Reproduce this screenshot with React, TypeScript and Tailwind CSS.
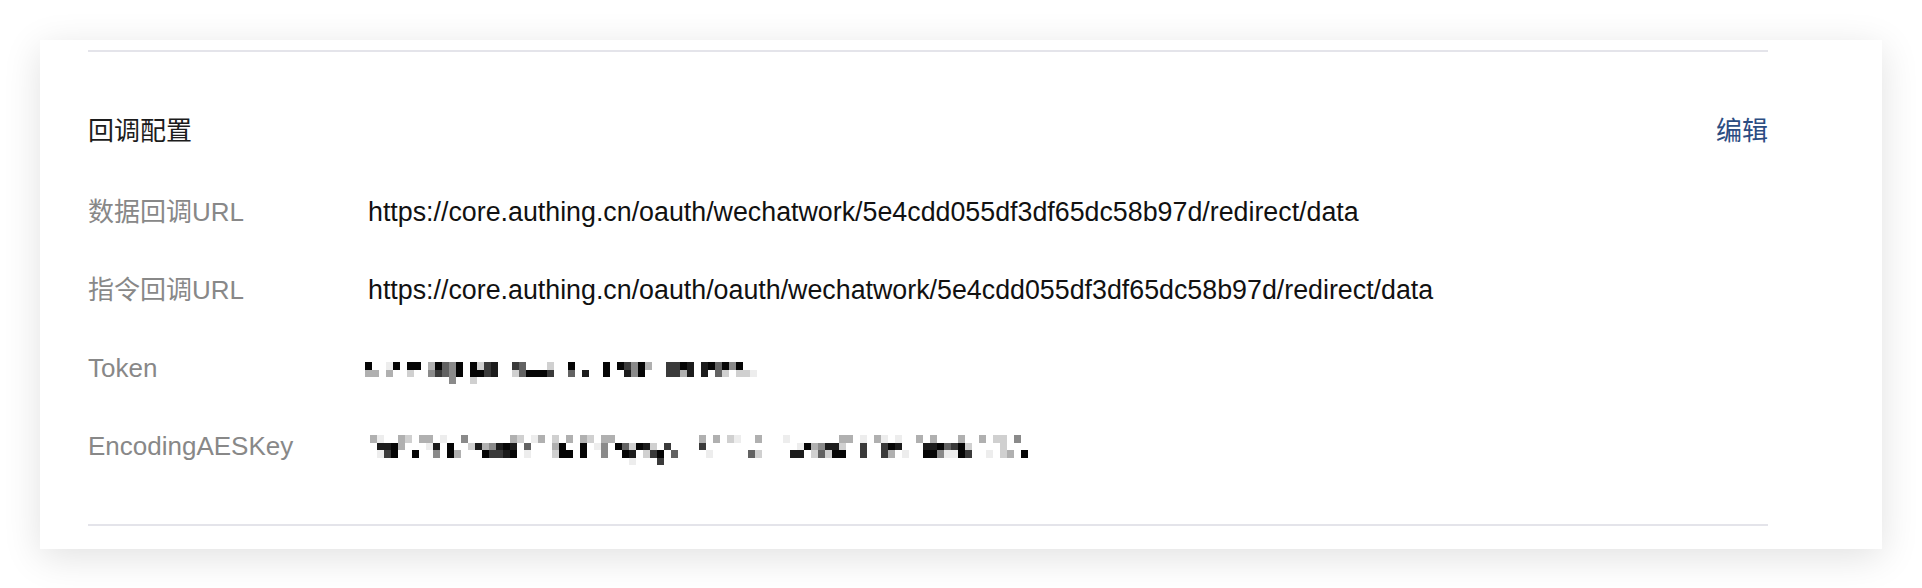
import React from 'react';

// shades used by the pixelated (masked) secret values
const shades: Record<string, string> = {
  a: '#ededed',
  b: '#d0d0d0',
  c: '#b0b0b0',
  d: '#8a8a8a',
  e: '#626262',
  f: '#3a3a3a',
  g: '#1c1c1c',
  h: '#050505',
};

const tokenRows = [
  '0h 3a 4h 6h 7h 9c 10h 11e 12d 13h 15h 16b 17f 18g 21f 22e 26b 29h 34h 36h 37f 38d 39h 40c 43f 44f 45h 46g 48g 49h 50e 51h 52d 53h',
  '0c 1c 3c 6b 9d 10f 11e 12d 13h 15h 16h 17f 18g 21b 22e 23h 24h 25h 26f 29e 31g 34h 37g 38d 39h 43f 44f 45c 46g 48g 50e 51b 53b 54b 55a',
  '12d 15b',
];

const aesKeyRows = [
  '0c 1a 4c 5b 7c 8c 10a 13d 20c 21b 23a 24c 26b 28c 30c 31b 33c 34c 47c 49c 51b 52a 55c 59a 67c 68c 70a 72c 73a 75a 78c 80c 84c 87c 89b 90b 92d',
  '1g 2g 3h 4c 8a 9g 11h 14b 15g 16c 17d 18g 19h 20g 22e 26c 27h 30h 32a 33d 35h 36e 37b 38h 39g 40b 42f 47f 61a 62h 63c 64d 65g 66g 67b 70f 73f 74h 75g 79g 80g 81h 82e 83f 84h 85b 90b',
  '1a 2f 3h 6h 9d 11h 12c 16h 17f 18f 19g 20h 22a 26b 27h 28h 30h 33d 36h 37g 39b 40f 41h 43e 48a 54e 55b 60g 61g 63b 64e 65b 66h 67h 70f 73f 74c 76a 79h 80h 81d 82a 83a 84h 85f 88a 90b 91c 93h',
  '37a 41f',
];

function Mosaic({ rows, cols, cellH }: { rows: string[]; cols: number; cellH: number }) {
  const cellW = 7;
  const cells = rows.flatMap((row, r) =>
    row.split(' ').map((item) => {
      const col = parseInt(item, 10);
      const shade = item.replace(/[0-9]/g, '');
      return (
        <rect key={`${r}-${col}`} x={col * cellW} y={r * cellH} width={cellW} height={cellH} fill={shades[shade]} />
      );
    }),
  );
  return (
    <svg width={cols * cellW} height={rows.length * cellH} shapeRendering="crispEdges">
      {cells}
    </svg>
  );
}

const font = { fontFamily: '"Liberation Sans", "Noto Sans CJK SC", sans-serif' };

export default function App() {
  const urlRows = [
    {
      label: '数据回调URL',
      value: 'https://core.authing.cn/oauth/wechatwork/5e4cdd055df3df65dc58b97d/redirect/data',
    },
    {
      label: '指令回调URL',
      value: 'https://core.authing.cn/oauth/oauth/wechatwork/5e4cdd055df3df65dc58b97d/redirect/data',
    },
  ];

  return (
    <div className="min-h-screen w-[1922px] bg-white pt-[40px]" style={font}>
      <div className="mx-[40px] bg-white pl-[48px] pr-[114px] pt-[10px] pb-[23px] shadow-[0_8px_36px_rgba(0,0,0,0.12)]">
        {/* divider from the section above */}
        <div className="h-[2px] bg-[#e4e4ea]" />

        <div className="mt-[39px]">
          {/* header */}
          <div className="flex h-[80px] items-center justify-between">
            <h3 className="text-[26px] leading-none text-[#1c1c1c]">回调配置</h3>
            <button className="text-[26px] leading-none text-[#2b4d82]">编辑</button>
          </div>

          <div className="pt-[2px]">
            {urlRows.map((row) => (
              <div key={row.label} className="flex h-[78px] items-center">
                <span className="w-[280px] shrink-0 text-[26px] leading-none text-[#888]">{row.label}</span>
                <span className="whitespace-nowrap text-[26.8px] leading-none text-[#111]">{row.value}</span>
              </div>
            ))}

            <div className="flex h-[78px] items-center">
              <span className="w-[280px] shrink-0 text-[26px] leading-none text-[#888]">Token</span>
              <div className="-ml-[3px] mt-[10px]">
                <Mosaic rows={tokenRows} cols={56} cellH={7.5} />
              </div>
            </div>

            <div className="flex h-[78px] items-center">
              <span className="w-[280px] shrink-0 text-[26px] leading-none text-[#888]">EncodingAESKey</span>
              <div className="ml-[2px] mt-[8px]">
                <Mosaic rows={aesKeyRows} cols={94} cellH={7.5} />
              </div>
            </div>
          </div>
        </div>

        <div className="mt-[39px] h-[2px] bg-[#e4e4ea]" />
      </div>
    </div>
  );
}
